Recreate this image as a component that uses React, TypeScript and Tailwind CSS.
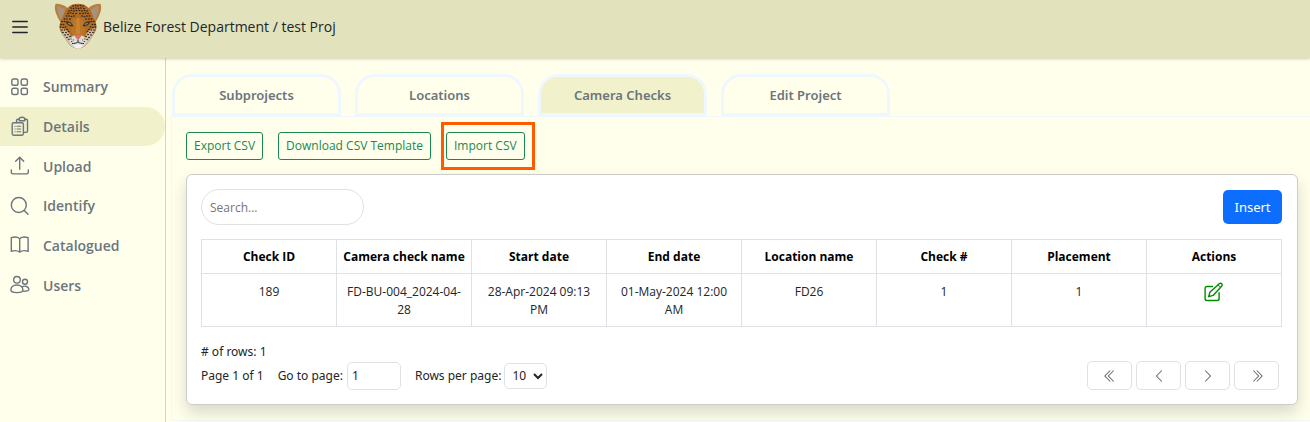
import React, { useState } from "react";
import { BsChevronDoubleLeft, BsChevronDoubleRight, BsChevronLeft, BsChevronRight } from "react-icons/bs";

const stroke = {
  fill: "none",
  stroke: "currentColor",
  strokeLinecap: "round" as const,
  strokeLinejoin: "round" as const,
  "aria-hidden": true,
};

function GridIcon() {
  return (
    <svg className="size-5" viewBox="0 0 20 20" strokeWidth="1.4" {...stroke}>
      <rect x="1.8" y="2" width="6.2" height="6.2" rx="1.8" />
      <rect x="11.2" y="2" width="6.2" height="6.2" rx="1.8" />
      <rect x="1.8" y="11.3" width="6.2" height="6.2" rx="1.8" />
      <rect x="11.2" y="11.3" width="6.2" height="6.2" rx="1.8" />
    </svg>
  );
}

function DetailsIcon() {
  return (
    <svg className="size-5" viewBox="0 0 20 20" strokeWidth="1.4" {...stroke}>
      <rect x="2.2" y="6.8" width="11.2" height="12.4" rx="1.4" />
      <path d="M6.6 6.500V4.500c0-.8.5-1.300 1.300-1.300h1.200M14.800 3.200h1.400c.8 0 1.300.5 1.300 1.300V15c0 .9-.5 1.400-1.300 1.400h-2.500" />
      <path d="M9.200 4.800V3.100c0-1.300 1.100-1.900 2.800-1.900s2.800.6 2.800 1.900v1.700z" />
      <path strokeWidth="1.1" d="M4.900 10.200h.3M7 10.200h3.700M4.900 13h.3M7 13h3.700M4.900 15.800h.3M7 15.800h3.700" />
    </svg>
  );
}

function UploadIcon() {
  return (
    <svg className="size-5" viewBox="0 0 20 20" strokeWidth="1.4" {...stroke}>
      <path d="M9.700 13.200V1.500M5.700 5.300l4-4 4 4M1.300 14v2.200c0 1 .7 1.700 1.700 1.700h13.600c1 0 1.700-.7 1.700-1.700V14" />
    </svg>
  );
}

function SearchIcon() {
  return (
    <svg className="size-5" viewBox="0 0 20 20" strokeWidth="1.4" {...stroke}>
      <circle cx="8.8" cy="9" r="7.5" />
      <path d="M14.200 14.500l3.800 3.800" />
    </svg>
  );
}

function BookIcon() {
  return (
    <svg className="size-5" viewBox="0 0 20 20" strokeWidth="1.4" {...stroke}>
      <path d="M9.700 3.700C7.800 2 4.300 1.800 1.300 2.700v13.500c3-.8 6.400-.7 8.400.9 2-1.600 5.400-1.700 8.400-.9V2.700c-3-.9-6.500-.7-8.400 1zM9.700 3.700v13.400" />
    </svg>
  );
}

function UsersIcon() {
  return (
    <svg className="size-5" viewBox="0 0 20 20" strokeWidth="1.4" {...stroke}>
      <circle cx="7" cy="4.800" r="3.300" />
      <path d="M.9 15c0-3 2.500-5 6-5s6 2 6 5c0 1.800-2.600 2.600-6 2.600s-6-.8-6-2.600z" />
      <circle cx="15" cy="6.800" r="2.500" />
      <path d="M12.200 11.600c3-1.300 6.500.1 6.700 2.800.1 1.400-2 1.900-5.200 1.900" />
    </svg>
  );
}

function EditIcon() {
  return (
    <svg className="size-5" viewBox="0 0 20 20" strokeWidth="1.4" {...stroke}>
      <path d="M8.600 4.500H2.900c-1.100 0-1.800.7-1.800 1.800v10.400c0 1.100.7 1.800 1.800 1.800h10.400c1.100 0 1.800-.7 1.800-1.800v-6" />
      <path d="M4.700 14.700l1.200-4.500 9.300-8.400c.8-.7 1.900-.7 2.500 0 .7.7.6 1.700-.1 2.400l-8.500 9.200z" />
      <path d="M14.100 2.900l2.600 2.500" strokeWidth="1" />
    </svg>
  );
}

const spots: [number, number][] = [
  [19, 3], [21.5, 2.5], [24, 3], [26.5, 2.5], [29, 3], [17, 5], [19.5, 5.5], [22, 5], [24.5, 5.5], [27, 5], [30, 5.5],
  [15, 8], [17.5, 7.5], [20, 8], [22.5, 7.5], [25.5, 7.5], [28, 8], [30.5, 7.5], [33, 8],
  [14, 10.5], [16.5, 10], [19, 10.5], [22, 10.5], [26, 10.5], [29, 10.5], [31.5, 10], [34, 10.5],
  [12.5, 13], [15, 13], [17.5, 13.5], [30.5, 13.5], [33, 13], [35.5, 13], [20, 13], [28, 13],
  [10.5, 16], [13, 16], [16, 16], [32, 16], [35, 16], [37.5, 16], [8, 18.5], [10.5, 18.5], [37.5, 18.5], [40, 18.5],
  [7, 21.5], [9.5, 21.5], [38.5, 21.5], [41, 21.5], [6.5, 24], [9, 24.5], [11.5, 24], [36.5, 24], [39, 24.5], [41.5, 24],
  [8, 27], [10.5, 27], [13, 26.5], [35, 26.5], [37.5, 27], [40, 27], [9, 29.5], [12, 29.5], [14.5, 28.5], [33.5, 28.5], [36, 29.5], [39, 29.5],
  [11, 32], [14, 31.5], [34, 31.5], [37, 32], [13, 34.5], [16, 33.5], [32, 33.5], [35, 34.5], [15, 36.5], [33, 36.5],
];

function JaguarLogo() {
  return (
    <svg className="h-[46px] w-12 shrink-0" viewBox="0 0 48 46" aria-hidden="true">
      <path d="M1.500 1C7 0 14 4 18 10L8 21C4 16-1 7 1.500 1z" fill="#b8803c" />
      <path d="M46.500 1C41 0 34 4 30 10l10 11c4-5 9-14 6.500-20z" fill="#b8803c" />
      <path d="M3.500 3c5 1 9 4 10.500 9l-5.500 7C5 14 3.500 9 3.500 3z" fill="#a8927c" />
      <path d="M44.500 3C39.500 4 35.500 7 34 12l5.500 7c3.500-5 5-10 5-16z" fill="#a8927c" />
      <path d="M24 .8c8 0 12.500 4.700 14.500 11.200L42 20c1 4 .5 7-1.500 10L36 37c-3 5-7 8.500-12 8.500S15 42 12 37l-4.500-7C5.500 27 5 24 6 20l3.500-8C11.500 5.500 16 .8 24 .8z" fill="#b06c24" />
      <path d="M7 25c3 .5 6 2 8 5l4 7h10l4-7c2-3 5-4.500 8-5 0 4-2.500 7.500-5 12-3 5-7 8.500-12 8.500S15 42 12 37c-2.500-4.500-5-8-5-12z" fill="#cdbfa9" />
      <path d="M19.500 15c2.500 2 6.500 2 9 0l2.500 11-2 9H19l-2-9z" fill="#bd7426" />
      <path d="M22.500 15h3l.8 16h-4.600z" fill="#cb832f" />
      <g fill="#2b211a">
        {spots.map(([x, y]) => (
          <ellipse key={`${x}-${y}`} cx={x} cy={y} rx=".95" ry=".8" />
        ))}
      </g>
      <path d="M11.500 18.500c3-.7 6.500 1 8 4.800-3.500.5-6.500-1-8-4.800zM36.500 18.500c-3-.7-6.500 1-8 4.800 3.500.5 6.500-1 8-4.800z" fill="#3d3324" />
      <path d="M13.500 19.800c2 0 3.600.8 4 2-2 .1-3.200-.6-4-2zM34.500 19.800c-2 0-3.600.8-4 2 2 .1 3.200-.6 4-2z" fill="#8d9780" />
      <path d="M18 33.500c2-1 4-1.200 6-1.200s4 .2 6 1.200l3 4c-2.500 4.500-5 8-9 8s-6.500-3.500-9-8z" fill="#dedbd6" />
      <path d="M20.500 32.300c2-.7 5-.7 7 0-.5 1.700-2 3.300-3.500 4.200-1.500-.9-3-2.500-3.500-4.200z" fill="#d8706c" />
      <path d="M24 36.500v2.300M18 40.500c2.300 0 4.800-.2 6-1.700 1.200 1.500 3.700 1.700 6 1.700" fill="none" stroke="#2e2825" strokeWidth="1" />
      <path d="M16.500 36h1.300M18.800 37h1M17 38.500h1.300M31.500 36h-1.300M29.200 37h-1M31 38.500h-1.300" stroke="#3a332e" strokeWidth=".9" />
      <path d="M19.500 42c3-1 6-1 9 0-1 2-2.500 3.500-4.500 3.500S20.500 44 19.500 42z" fill="#f1f1f1" />
    </svg>
  );
}

const navItems = [
  { label: "Summary", Icon: GridIcon },
  { label: "Details", Icon: DetailsIcon, active: true },
  { label: "Upload", Icon: UploadIcon },
  { label: "Identify", Icon: SearchIcon },
  { label: "Catalogued", Icon: BookIcon },
  { label: "Users", Icon: UsersIcon },
];

const tabs = ["Subprojects", "Locations", "Camera Checks", "Edit Project"];

const columns = ["Check ID", "Camera check name", "Start date", "End date", "Location name", "Check #", "Placement", "Actions"];

const rows = [["189", "FD-BU-004_2024-04-28", "28-Apr-2024 09:13 PM", "01-May-2024 12:00 AM", "FD26", "1", "1"]];

const pagers = [
  { label: "First page", Icon: BsChevronDoubleLeft },
  { label: "Previous page", Icon: BsChevronLeft },
  { label: "Next page", Icon: BsChevronRight },
  { label: "Last page", Icon: BsChevronDoubleRight },
];

function OutlineButton({ children }: { children: React.ReactNode }) {
  return (
    <button type="button" className="h-7 rounded-[3px] border border-[#198754] px-[7px] pb-px whitespace-nowrap text-[#198754]">
      {children}
    </button>
  );
}

export default function App() {
  const [activeTab, setActiveTab] = useState("Camera Checks");
  const [page, setPage] = useState("1");

  return (
    <div className="flex min-h-screen flex-col bg-[#ffffec] font-['Open_Sans','Noto_Sans',sans-serif] text-[12px] text-[#212529]">
      <header className="z-10 flex h-[58px] items-start bg-[#e2e2bd] pl-2 shadow-[0_1px_3px_rgba(0,0,0,0.2)]">
        <button type="button" aria-label="Toggle menu" className="flex h-[54px] w-[46px] items-center pl-1">
          <svg className="h-4 w-4" viewBox="0 0 16 16" strokeWidth="1.5" {...stroke}>
            <path d="M.8 2.500h14.400M.8 8h14.400M.8 13.500h14.400" />
          </svg>
        </button>
        <div className="flex items-center gap-px pt-[3px]">
          <JaguarLogo />
          <span className="text-[14px]">Belize Forest Department / test Proj</span>
        </div>
      </header>

      <div className="flex flex-1">
        <aside className="w-[166px] shrink-0 border-r border-[#d3d3d0] pt-[9px]">
          <nav className="grid h-[238px] grid-rows-6">
            {navItems.map(({ label, Icon, active }) => (
              <a
                key={label}
                href={`#${label.toLowerCase()}`}
                className={`flex items-center gap-[13px] rounded-r-full pl-[10px] text-[14px] font-semibold text-[#6c757d] ${active ? "bg-[#f1f1cb]" : ""}`}
              >
                <Icon />
                {label}
              </a>
            ))}
          </nav>
        </aside>

        <main className="flex min-w-0 flex-1 flex-col pt-4 pl-[5px]">
          <div role="tablist" className="flex gap-[14px] pl-px">
            {tabs.map((tab) => (
              <button
                key={tab}
                type="button"
                role="tab"
                aria-selected={tab === activeTab}
                onClick={() => setActiveTab(tab)}
                className={`h-[42px] w-[169px] rounded-t-[20px] border-[3px] border-[#f0f8ff] pt-[2px] font-['Noto_Sans',sans-serif] text-[13px] font-semibold text-[#6c757d] ${tab === activeTab ? "bg-[#f1f1cb]" : ""}`}
              >
                {tab}
              </button>
            ))}
          </div>

          <section className="border-y border-l border-[#f0f8ff] pt-[15px] pr-3 pb-[15px] pl-[14px]">
            <div className="flex gap-[15px]">
              <OutlineButton>Export CSV</OutlineButton>
              <OutlineButton>Download CSV Template</OutlineButton>
              <div className="relative">
                <OutlineButton>Import CSV</OutlineButton>
                <span className="pointer-events-none absolute -inset-y-[10px] -right-[10px] -left-[5px] border-[3px] border-[#ff5a00]" />
              </div>
            </div>

            <div className="mt-[14px] rounded-md border border-[#cccccb] bg-white py-[14px] pr-[15px] pl-[14px] shadow-[0_8px_16px_rgba(0,0,0,0.15)]">
              <div className="flex items-center justify-between">
                <input
                  type="search"
                  aria-label="Search"
                  placeholder="Search..."
                  className="h-9 w-[163px] rounded-full border border-[#dee2e6] px-2 placeholder:text-[#757575]"
                />
                <button type="button" className="h-[34px] w-[59px] rounded-[5px] bg-[#0d6efd] pt-px font-['Noto_Sans',sans-serif] text-[13px] text-white">
                  Insert
                </button>
              </div>

              <table className="mt-[14px] w-full table-fixed border-collapse text-center leading-[18px] text-black">
                <thead>
                  <tr>
                    {columns.map((column) => (
                      <th key={column} scope="col" className="h-[34px] border border-[#dee2e6] font-bold whitespace-nowrap">
                        {column}
                      </th>
                    ))}
                  </tr>
                </thead>
                <tbody>
                  {rows.map((row) => (
                    <tr key={row[0]}>
                      {row.map((value, i) => (
                        <td key={columns[i]} className="border border-[#dee2e6] px-2 pt-[9px] pb-[7px] align-top text-[#212529]">
                          {value}
                        </td>
                      ))}
                      <td className="border border-[#dee2e6] px-2 pt-2 pb-2 align-top">
                        <button type="button" aria-label="Edit" className="text-[#008a00]">
                          <EditIcon />
                        </button>
                      </td>
                    </tr>
                  ))}
                </tbody>
              </table>

              <div className="mt-4 font-['Noto_Sans',sans-serif] leading-[18px]"># of rows: 1</div>
              <div className="flex h-[29px] items-center justify-between pr-[3px] font-['Noto_Sans',sans-serif]">
                <div className="flex items-center gap-[14px]">
                  <span>Page 1 of 1</span>
                  <label className="flex items-center gap-1">
                    Go to page:
                    <input
                      type="text"
                      inputMode="numeric"
                      value={page}
                      onChange={(e) => setPage(e.target.value)}
                      className="h-7 w-[54px] rounded-[5px] border border-[#dee2e6] px-1"
                    />
                  </label>
                  <label className="flex items-center gap-[3px]">
                    Rows per page:
                    <select defaultValue="10" className="h-[26px] w-[43px] rounded-[5px] border border-[#dee2e6] bg-white px-[3px]">
                      <option>10</option>
                      <option>20</option>
                      <option>50</option>
                    </select>
                  </label>
                </div>
                <div className="flex gap-1">
                  {pagers.map(({ label, Icon }) => (
                    <button
                      key={label}
                      type="button"
                      aria-label={label}
                      className="flex h-[29px] w-[45px] items-center justify-center rounded-[5px] border border-[#dee2e6] text-[#555555]"
                    >
                      <Icon size={14} />
                    </button>
                  ))}
                </div>
              </div>
            </div>
          </section>
        </main>
      </div>
    </div>
  );
}
